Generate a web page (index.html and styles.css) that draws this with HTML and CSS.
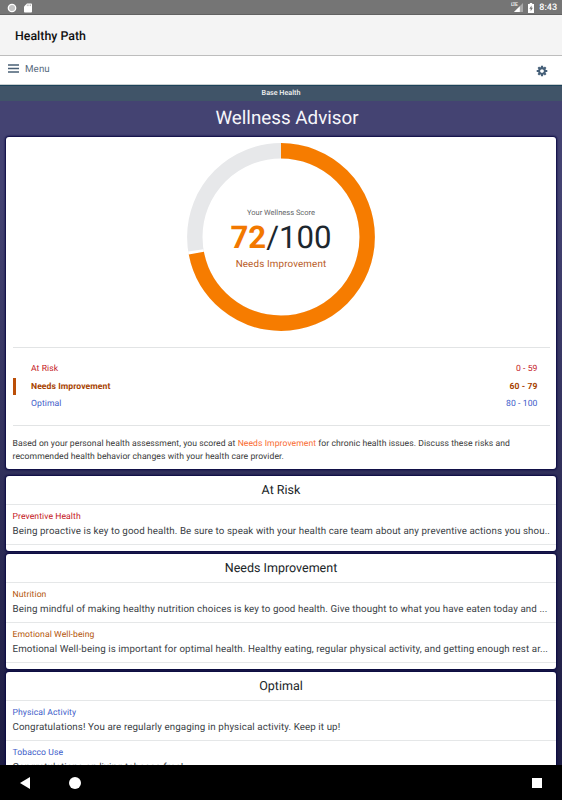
FILE: index.html
```html
<!DOCTYPE html>
<html lang="en">
<head>
    <meta charset="UTF-8">
    <meta name="viewport" content="width=device-width, initial-scale=1.0">
    <title>Healthy Path</title>
    <link rel="stylesheet" href="styles.css">
</head>
<body>
    <div class="status-bar">
        <div class="status-icons">
            <svg width="10" height="10" viewBox="0 0 10 10"><circle cx="5" cy="5" r="3.7" fill="#c4c4c4" stroke="#fff" stroke-width="1.3"/></svg>
            <svg width="8" height="10" viewBox="0 0 8 10"><path d="M3 .5h4.2q.8 0 .8.8v7.4q0 .8-.8.8H.8Q0 9.500 0 8.700V3.500z" fill="#fff"/><path d="M3.300 1.500v1.600M4.900 1.500v1.600M6.500 1.500v1.600" stroke="#999" stroke-width=".7"/></svg>
        </div>
        <div class="status-icons right">
            <div class="signal">
                <span class="lte">LTE</span>
                <svg width="9" height="9" viewBox="0 0 9 9"><path d="M9 0v9H0z" fill="#a9a9a9"/><path d="M5.800 3.200V9H0z" fill="#fff"/></svg>
            </div>
            <svg class="battery" width="6" height="10" viewBox="0 0 6 10"><path d="M1.800 0h2.400v1H6v9H0V1h1.800z" fill="#fff"/><path d="M3.600 2.500L1.300 5.800h1.400v2.500l2.200-3.500H3.500z" fill="#747474"/></svg>
            <span class="clock">8:43</span>
        </div>
    </div>
    <header class="app-bar">Healthy Path</header>
    <nav class="menu-bar">
        <div class="menu">
            <svg width="11" height="9" viewBox="0 0 11 9"><path d="M0 1h11M0 4.500h11M0 8h11" stroke="#4a6076" stroke-width="1.700"/></svg>
            <span>Menu</span>
        </div>
        <svg class="gear" width="12" height="12" viewBox="-6 -6 12 12">
            <g stroke="#455f78" stroke-width="2.200">
                <path d="M0-5.300V-3M0 3v2.300M-5.300 0H-3M3 0h2.300M-3.700-3.700l1.500 1.500M2.200 2.200l1.500 1.500M3.700-3.700L2.200-2.200M-2.200 2.200l-1.500 1.500"/>
            </g>
            <circle r="2.900" fill="none" stroke="#455f78" stroke-width="2.100"/>
        </svg>
    </nav>
    <div class="base-health">Base Health</div>

    <main class="content">
        <h1>Wellness Advisor</h1>

        <section class="card score-card">
            <div class="ring">
                <svg width="188" height="188" viewBox="0 0 188 188">
                    <g fill="none" stroke-width="15.400" transform="rotate(-90 94 94)">
                        <circle cx="94" cy="94" r="86.200" stroke="#e7e8ea"/>
                        <circle cx="94" cy="94" r="86.200" stroke="#fff" pathLength="100" stroke-dasharray="72.500 100"/>
                        <circle cx="94" cy="94" r="86.200" stroke="#f67c00" pathLength="100" stroke-dasharray="72 100"/>
                    </g>
                </svg>
                <div class="score">
                    <div class="score-label">Your Wellness Score</div>
                    <div class="score-value"><b>72</b>/100</div>
                    <div class="score-level">Needs Improvement</div>
                </div>
            </div>
            <div class="ranges">
                <div class="range risk"><span>At Risk</span><span>0 - 59</span></div>
                <div class="range needs current"><span>Needs Improvement</span><span>60 - 79</span></div>
                <div class="range optimal"><span>Optimal</span><span>80 - 100</span></div>
            </div>
            <p class="summary">Based on your personal health assessment, you scored at <span class="level">Needs Improvement</span> for chronic health issues. Discuss these risks and recommended health behavior changes with your health care provider.</p>
        </section>

        <section class="card">
            <h2>At Risk</h2>
            <div class="item risk">
                <h3>Preventive Health</h3>
                <p>Being proactive is key to good health. Be sure to speak with your health care team about any preventive actions you shou..</p>
            </div>
        </section>

        <section class="card">
            <h2>Needs Improvement</h2>
            <div class="item needs">
                <h3>Nutrition</h3>
                <p>Being mindful of making healthy nutrition choices is key to good health. Give thought to what you have eaten today and ...</p>
            </div>
            <div class="item needs">
                <h3>Emotional Well-being</h3>
                <p>Emotional Well-being is important for optimal health. Healthy eating, regular physical activity, and getting enough rest ar...</p>
            </div>
        </section>

        <section class="card">
            <h2>Optimal</h2>
            <div class="item optimal">
                <h3>Physical Activity</h3>
                <p>Congratulations! You are regularly engaging in physical activity. Keep it up!</p>
            </div>
            <div class="item optimal">
                <h3>Tobacco Use</h3>
                <p>Congratulations on living tobacco free!</p>
            </div>
        </section>
    </main>

    <footer class="system-nav">
        <svg width="10" height="12" viewBox="0 0 10 12"><path d="M10 0v12L0 6z" fill="#fff"/></svg>
        <span class="home"></span>
        <span class="recent"></span>
    </footer>
</body>
</html>
```
FILE: styles.css
```css
* {
    box-sizing: border-box;
}

body {
    margin: 0;
    height: 800px;
    display: flex;
    flex-direction: column;
    overflow: hidden;
    font-family: Roboto, sans-serif;
    text-rendering: geometricPrecision;
    color: #30363a;
    background-color: #fff;
}

h1, h2, h3, p {
    margin: 0;
    font-weight: 400;
}

svg {
    display: block;
    flex: none;
}

.status-bar {
    flex: none;
    height: 15px;
    display: flex;
    justify-content: space-between;
    padding: 0 5px 0 7px;
    background-color: #757575;
    border-bottom: 1px solid #626262;
}

.status-icons {
    display: flex;
    align-items: center;
    gap: 7px;
    padding-top: 1px;
}

.status-icons.right {
    gap: 5px;
}

.signal {
    display: flex;
    align-items: center;
}

.lte {
    font-size: 5px;
    line-height: 5px;
    font-weight: 700;
    color: #eee;
    margin: -5px -7px 0 0;
    letter-spacing: -0.6px;
}

.signal svg {
    margin-left: 4px;
}

.clock {
    color: #fff;
    font-size: 9px;
    font-weight: 500;
    line-height: 14px;
    padding-top: 1px;
}

.app-bar {
    flex: none;
    height: 41px;
    padding-left: 15px;
    font-size: 12.4px;
    font-weight: 500;
    line-height: 43px;
    color: #101010;
    background-color: #f4f4f4;
    border-bottom: 1px solid #bdbdbd;
}

.menu-bar {
    flex: none;
    height: 29px;
    display: flex;
    justify-content: space-between;
    padding: 0 14px 0 8px;
    border-bottom: 1px solid #c9ced0;
}

.menu {
    display: flex;
    align-items: center;
    gap: 6px;
    height: 25px;
    font-size: 9.75px;
    letter-spacing: 0.1px;
    color: #586b7e;
}

.menu span {
    padding-top: 2px;
}

.gear {
    margin-top: 8.5px;
}

.base-health {
    flex: none;
    height: 16px;
    background-color: #405468;
    border-top: 1px solid #1c4259;
    color: #f4f4f4;
    font-size: 7.2px;
    font-weight: 500;
    line-height: 14px;
    text-align: center;
}

.content {
    flex: 1;
    min-height: 0;
    overflow: hidden;
    padding: 0 6px;
    background: linear-gradient(#444372 0, #444372 90px, #1d1c43 100%);
}

h1 {
    height: 36px;
    padding-left: 12px;
    font-size: 18.8px;
    line-height: 35px;
    text-align: center;
    color: #f6f6fa;
}

.card {
    padding-bottom: 6px;
    margin-bottom: 3px;
    background-color: #fff;
    border-radius: 3px;
    box-shadow: 0 0 2px 1px #080740;
}

.score-card {
    height: 332px;
    padding: 5.5px 6.5px 0;
    margin-bottom: 6.5px;
}

.ring {
    display: grid;
    width: 188px;
    height: 204.5px;
    margin: 0 auto;
}

.ring > * {
    grid-area: 1 / 1;
}

.score {
    padding-top: 64px;
    text-align: center;
}

.score-label {
    font-size: 7.5px;
    line-height: 12px;
    color: #646668;
}

.score-value {
    font-size: 31.2px;
    line-height: 38px;
    color: #1d272e;
}

.score-value b {
    color: #f27800;
}

.score-level {
    font-size: 9.8px;
    line-height: 15px;
    letter-spacing: 0.15px;
    color: #b85a24;
}

.ranges {
    height: 79px;
    padding: 12px 0;
    border-top: 1px solid #e2e4e5;
    border-bottom: 1px solid #e2e4e5;
}

.range {
    display: flex;
    justify-content: space-between;
    height: 17.5px;
    padding: 0 12px 0 18.5px;
    font-size: 8.6px;
    letter-spacing: 0.08px;
    line-height: 19px;
}

.range.current {
    padding-left: 15.5px;
    border-left: 3px solid #bb4f08;
    font-weight: 700;
}

.risk {
    color: #c4161c;
}

.needs {
    color: #b4560a;
}

.range.needs {
    color: #a74200;
}

.optimal {
    color: #3d5bc9;
}

.summary {
    padding-top: 12px;
    font-size: 8.6px;
    letter-spacing: 0.065px;
    line-height: 13px;
    color: #383838;
}

.level {
    color: #f96b32;
}

h2 {
    height: 29px;
    font-size: 12.5px;
    line-height: 29px;
    text-align: center;
    color: #202528;
    border-bottom: 1px solid #e5e7e8;
}

.item {
    height: 40px;
    padding: 5px 6.5px 0;
    border-bottom: 1px solid #e5e7e8;
}

.item h3 {
    font-size: 8.6px;
    letter-spacing: 0.08px;
    line-height: 14px;
}

.item p {
    font-size: 9.75px;
    line-height: 16px;
    letter-spacing: 0.1px;
    white-space: nowrap;
    color: #394044;
}

.system-nav {
    flex: none;
    display: flex;
    align-items: center;
    height: 35px;
    padding: 0 20px;
    background-color: #000;
}

.home {
    width: 12px;
    height: 12px;
    margin-left: 39px;
    border-radius: 50%;
    background-color: #fff;
}

.recent {
    width: 10px;
    height: 10px;
    margin-left: auto;
    background-color: #fff;
}
```
